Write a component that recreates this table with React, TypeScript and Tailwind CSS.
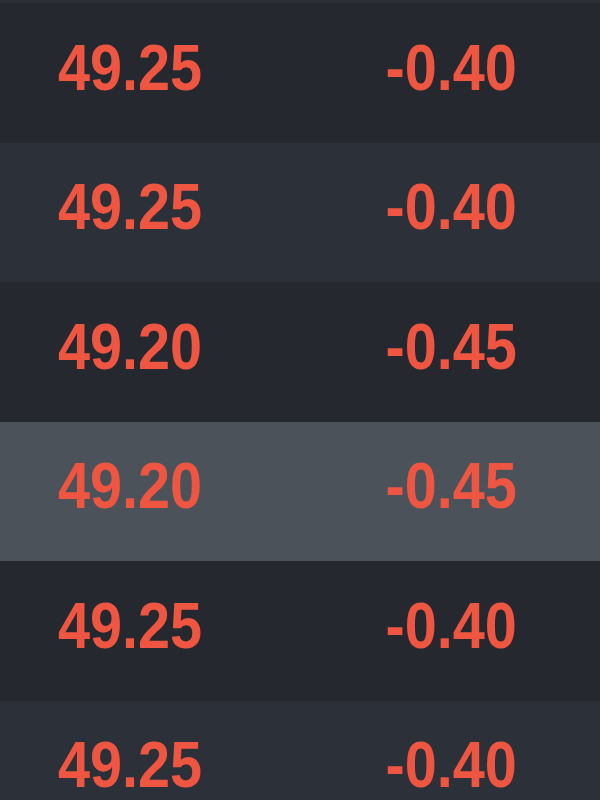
import React from 'react';

const rows = [
  { price: '49.25', change: '-0.40', tone: 'dark' },
  { price: '49.25', change: '-0.40', tone: 'light' },
  { price: '49.20', change: '-0.45', tone: 'dark' },
  { price: '49.20', change: '-0.45', tone: 'active' },
  { price: '49.25', change: '-0.40', tone: 'dark' },
  { price: '49.25', change: '-0.40', tone: 'light' },
];

const toneClass: Record<string, string> = {
  dark: 'bg-[#25282f]',
  light: 'bg-[#2c3038]',
  active: 'bg-[#4b525a]',
};

export default function App() {
  return (
    <div className="w-[600px] h-[800px] overflow-hidden bg-[#25282f] font-['Liberation_Sans',Arial,sans-serif]">
      {/* tail of the previous row */}
      <div className="h-[3px] bg-[#2c3038]" />
      {rows.map((row, i) => (
        <div
          key={i}
          className={`h-[139.5px] flex justify-between pt-[32.5px] pl-[58px] pr-[83px] text-[64px] leading-none font-bold text-[#ef5642] ${toneClass[row.tone]}`}
        >
          <span className="origin-left scale-x-[0.9]">{row.price}</span>
          <span className="origin-right scale-x-[0.9]">{row.change}</span>
        </div>
      ))}
    </div>
  );
}
